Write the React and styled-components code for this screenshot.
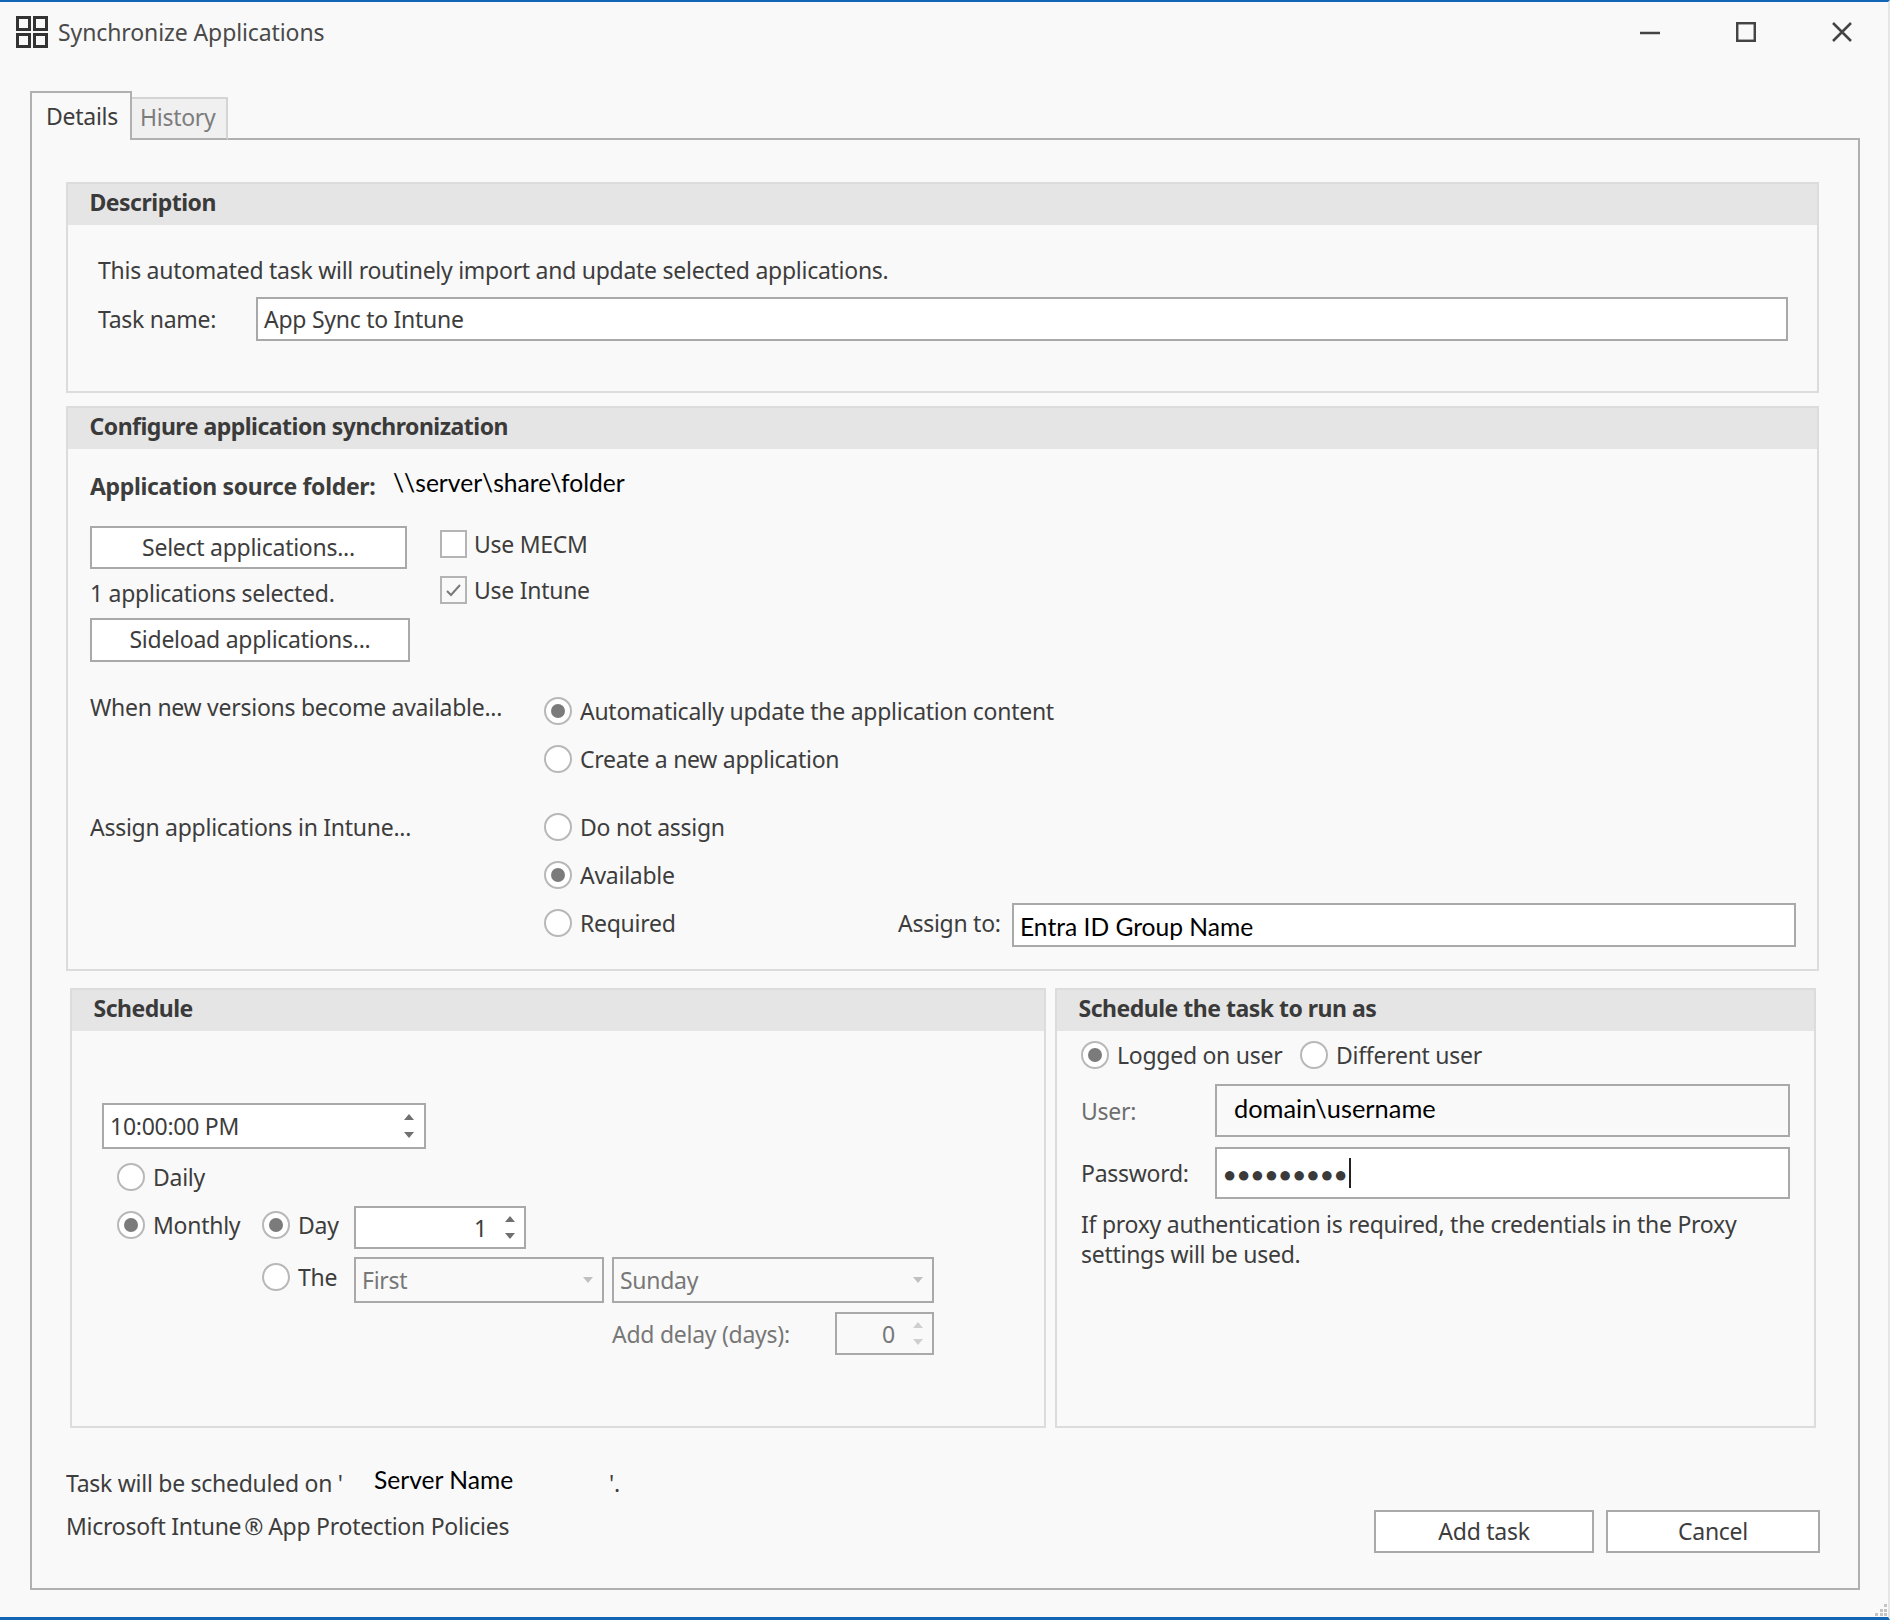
import styled, { createGlobalStyle } from "styled-components";

const Global = createGlobalStyle`
  html, body { margin: 0; padding: 0; background: #fff; }
  * { box-sizing: border-box; }
`;

const Win = styled.div`
  position: relative;
  width: 1890px;
  height: 1620px;
  background: #f9f9f9;
  border-top: 2px solid #1266b5;
  border-bottom: 3px solid #1266b5;
  border-right: 2px solid #e6e6e6;
  font-family: "Noto Sans", "Open Sans", sans-serif;
  font-size: 23px;
  letter-spacing: -0.27px;
  color: #3d3d3d;
`;

const TitleBar = styled.div`
  display: flex;
  align-items: center;
  height: 60px;
  padding-left: 16px;
`;

const Title = styled.div`
  margin-left: 10px;
  flex: 1;
  color: #4a4a4a;
  letter-spacing: -0.1px;
`;

const WinButtons = styled.div`
  display: flex;
  gap: 76px;
  margin-right: 36px;
`;

const TabWrap = styled.div`
  display: flex;
  align-items: flex-end;
  height: 47px;
  margin-top: 31px;
  margin-bottom: -2px;
  padding-left: 30px;
  position: relative;
  z-index: 1;
`;

const Tab = styled.div`
  flex-shrink: 0;
  height: ${(p) => (p.$active ? "49px" : "43px")};
  width: ${(p) => (p.$active ? "102px" : "96px")};
  padding-left: ${(p) => (p.$active ? "14px" : "8px")};
  padding-top: ${(p) => (p.$active ? "5px" : "0")};
  background: ${(p) => (p.$active ? "#f9f9f9" : "#f0f0f0")};
  border: 2px solid ${(p) => (p.$active ? "#b0b0b0" : "#d4d4d4")};
  border-bottom: ${(p) => (p.$active ? "none" : "2px solid #b0b0b0")};
  border-left: ${(p) => (p.$active ? "2px solid #b0b0b0" : "none")};
  color: ${(p) => (p.$active ? "#3d3d3d" : "#7c7c7c")};
  line-height: 36px;
`;

const Panel = styled.div`
  margin-left: 30px;
  width: 1830px;
  height: 1452px;
  border: 2px solid #b0b0b0;
  padding: 42px 38px 0 34px;
`;

const Section = styled.section`
  border: 2px solid #dcdcdc;
  height: ${(p) => p.$h}px;
  width: ${(p) => p.$w || 1753}px;
  margin-bottom: ${(p) => p.$mb || 0}px;
`;

const SectionHead = styled.h2`
  margin: 0;
  height: 41px;
  background: #e5e5e5;
  font-size: 23px;
  font-weight: 700;
  line-height: 37px;
  padding-left: 21.5px;
  letter-spacing: -0.5px;
  color: #3a3a3a;
`;

const Line = styled.div`
  line-height: 30px;
  white-space: nowrap;
  margin: ${(p) => p.$m || 0};
`;

const DescBody = styled.div`
  padding: 30px 0 0 30px;
`;

const FieldRow = styled.div`
  display: flex;
  align-items: center;
  margin-top: ${(p) => p.$mt || 0}px;
`;

const Label = styled.div`
  flex: 0 0 ${(p) => p.$w}px;
  white-space: nowrap;
  color: ${(p) => p.$color || "inherit"};
`;

const Box = styled.div`
  display: flex;
  align-items: center;
  flex: 0 0 ${(p) => p.$w}px;
  height: ${(p) => p.$h}px;
  margin-top: ${(p) => p.$mt || 0}px;
  padding: 0 5px 0 ${(p) => p.$pl || 6}px;
  border: 2px solid #a9a9a9;
  background: ${(p) => (p.$off ? "#f9f9f9" : "#fff")};
  color: ${(p) => (p.$off ? "#777" : "inherit")};
  white-space: nowrap;
`;

const BoxText = styled.span`
  flex: 1;
  text-align: ${(p) => (p.$right ? "right" : "left")};
`;

const Dark = styled.span`
  position: relative;
  top: ${(p) => p.$top || 0}px;
  font-family: Lato, "Noto Sans", sans-serif;
  font-size: ${(p) => p.$size || 24.6}px;
  letter-spacing: 0;
  color: #000;
  white-space: nowrap;
`;

const ConfigBody = styled.div`
  padding: 22px 0 0 22px;
`;

const SourceRow = styled.div`
  display: flex;
  align-items: flex-start;
`;

const SourceLabel = styled.div`
  flex: 0 0 303px;
  font-weight: 700;
  letter-spacing: -0.33px;
  line-height: 30px;
`;

const SourceValue = styled(Dark)`
  margin-top: -3px;
`;

const AppsGrid = styled.div`
  display: grid;
  grid-template-columns: 350px 1fr;
  margin-top: 25px;
`;

const AppsLeft = styled.div`
  display: flex;
  flex-direction: column;
  align-items: flex-start;
`;

const Button = styled.button`
  display: block;
  width: ${(p) => p.$w}px;
  height: ${(p) => p.$h || 43}px;
  padding: 0 0 2px;
  background: #fff;
  border: 2px solid #a9a9a9;
  font: inherit;
  letter-spacing: inherit;
  color: #3d3d3d;
`;

const Checks = styled.div`
  display: flex;
  flex-direction: column;
  gap: 18px;
  padding-top: 4px;
`;

const CheckRow = styled.div`
  display: flex;
  align-items: center;
  gap: 7px;
  height: 28px;
`;

const CheckBox = styled.span`
  display: flex;
  align-items: center;
  justify-content: center;
  width: 27px;
  height: 28px;
  border: 2px solid #b4b4b4;
  background: ${(p) => (p.$on ? "#f9f9f9" : "#fff")};
`;

const OptGroup = styled.div`
  display: grid;
  grid-template-columns: 454px 1fr;
  margin-top: ${(p) => p.$mt}px;
`;

const OptLabel = styled.div`
  line-height: 30px;
  margin-top: ${(p) => p.$mt}px;
  white-space: nowrap;
`;

const RadioRow = styled.div`
  display: flex;
  align-items: center;
  gap: ${(p) => p.$gap || 8}px;
  flex: 0 0 ${(p) => (p.$w ? `${p.$w}px` : "auto")};
  height: ${(p) => p.$h || 48}px;
  margin-top: ${(p) => p.$mt || 0}px;
  white-space: nowrap;
`;

const Radio = styled.span`
  position: relative;
  flex: 0 0 28px;
  height: 28px;
  border-radius: 50%;
  border: 2px solid #b8b8b8;
  background: #fff;
  &::after {
    content: "";
    display: ${(p) => (p.$on ? "block" : "none")};
    position: absolute;
    left: 5px;
    top: 5px;
    width: 14px;
    height: 14px;
    border-radius: 50%;
    background: #7b7b7b;
  }
`;

const ScheduleRow = styled.div`
  display: flex;
  gap: 9px;
  margin-left: 4px;
  margin-top: 17px;
`;

const SchedBody = styled.div`
  padding: 72px 0 0 30px;
`;

const Indented = styled.div`
  margin-left: 15px;
`;

const Flex = styled.div`
  display: flex;
  align-items: ${(p) => p.$align || "center"};
  margin-top: ${(p) => p.$mt || 0}px;
  margin-left: ${(p) => p.$ml || 0}px;
`;

const Spacer = styled.div`
  flex: 0 0 ${(p) => p.$w}px;
`;

const Arrows = styled.span`
  display: flex;
  flex-direction: column;
  align-items: center;
  gap: ${(p) => p.$gap || 12}px;
  margin-right: ${(p) => p.$mr || 0}px;
  margin-left: ${(p) => p.$ml || 0}px;
`;

const Tri = styled.span`
  width: 0;
  height: 0;
  margin-right: ${(p) => p.$mr || 0}px;
  border-left: 5px solid transparent;
  border-right: 5px solid transparent;
  ${(p) => (p.$up ? "border-bottom" : "border-top")}: 6px solid ${(p) => p.$c || "#707070"};
`;

const RunBody = styled.div`
  padding-left: 24px;
`;

const Dots = styled.span`
  letter-spacing: 0.6px;
  font-size: 22px;
  line-height: 1;
  color: #3a3a3a;
  margin-left: 2px;
`;

const Caret = styled.span`
  width: 2px;
  height: 30px;
  background: #222;
  margin-left: 1px;
`;

const Note = styled.p`
  margin: 10px 0 0;
  width: 670px;
  line-height: 30px;
`;

const Footer = styled.div`
  display: flex;
  justify-content: space-between;
  margin-top: 39px;
`;

const FootLines = styled.div`
  display: flex;
  flex-direction: column;
  gap: 11px;
`;

const FootRow = styled.div`
  display: flex;
  height: 32px;
  align-items: center;
  white-space: nowrap;
`;

const Reg = styled.span`
  margin: 0 5px 0 3px;
`;

const Buttons = styled.div`
  display: flex;
  gap: 12px;
  margin-top: 43px;
`;

const Grip = styled.svg`
  position: absolute;
  right: 0;
  bottom: 0;
`;

const Icon = ({ children, size = 20, w = 2.5 }) => (
  <svg width={size} height={size} viewBox={`0 0 ${size} ${size}`} fill="none" stroke="#444" strokeWidth={w}>
    {children}
  </svg>
);

const Opt = ({ on, children, ...rest }) => (
  <RadioRow {...rest}>
    <Radio $on={on} />
    <span>{children}</span>
  </RadioRow>
);

export default function App() {
  return (
    <Win>
      <Global />
      <TitleBar>
        <svg width="32" height="32" viewBox="0 0 32 32" fill="none" stroke="#333" strokeWidth="3">
          <rect x="1.5" y="1.5" width="12" height="12" />
          <rect x="18.5" y="1.5" width="12" height="12" />
          <rect x="1.5" y="18.5" width="12" height="12" />
          <rect x="18.5" y="18.5" width="12" height="12" />
        </svg>
        <Title>Synchronize Applications</Title>
        <WinButtons>
          <Icon>
            <path d="M0 11h20" />
          </Icon>
          <Icon>
            <rect x="1.2" y="1.2" width="17.6" height="17.6" />
          </Icon>
          <Icon>
            <path d="M1 1l18 18M19 1L1 19" />
          </Icon>
        </WinButtons>
      </TitleBar>
      <TabWrap>
        <Tab $active>Details</Tab>
        <Tab>History</Tab>
      </TabWrap>
      <Panel>
        <Section $h={211} $mb={13}>
          <SectionHead>Description</SectionHead>
          <DescBody>
            <Line>This automated task will routinely import and update selected applications.</Line>
            <FieldRow $mt={12}>
              <Label $w={158}>Task name:</Label>
              <Box $w={1532} $h={44}>App Sync to Intune</Box>
            </FieldRow>
          </DescBody>
        </Section>
        <Section $h={565}>
          <SectionHead>Configure application synchronization</SectionHead>
          <ConfigBody>
            <SourceRow>
              <SourceLabel>Application source folder:</SourceLabel>
              <SourceValue>\\server\share\folder</SourceValue>
            </SourceRow>
            <AppsGrid>
              <AppsLeft>
                <Button $w={317}>Select applications...</Button>
                <Line $m="9px 0 10px">1 applications selected.</Line>
                <Button $w={320} $h={44}>Sideload applications...</Button>
              </AppsLeft>
              <Checks>
                <CheckRow>
                  <CheckBox />
                  Use MECM
                </CheckRow>
                <CheckRow>
                  <CheckBox $on>
                    <svg width="15" height="13" viewBox="0 0 15 13" fill="none" stroke="#7a7a7a" strokeWidth="2">
                      <path d="M1 7l4 4 9-10" />
                    </svg>
                  </CheckBox>
                  Use Intune
                </CheckRow>
              </Checks>
            </AppsGrid>
            <OptGroup $mt={25}>
              <OptLabel $mt={5}>When new versions become available...</OptLabel>
              <div>
                <Opt on>Automatically update the application content</Opt>
                <Opt>Create a new application</Opt>
              </div>
            </OptGroup>
            <OptGroup $mt={20}>
              <OptLabel $mt={9}>Assign applications in Intune...</OptLabel>
              <div>
                <Opt>Do not assign</Opt>
                <Opt on>Available</Opt>
                <Flex>
                  <Opt $w={354}>Required</Opt>
                  <Label $w={114}>Assign to:</Label>
                  <Box $w={784} $h={44} $mt={4}>
                    <Dark $size={24.6} $top={1}>Entra ID Group Name</Dark>
                  </Box>
                </Flex>
              </div>
            </OptGroup>
          </ConfigBody>
        </Section>
        <ScheduleRow>
          <Section $h={440} $w={976}>
            <SectionHead>Schedule</SectionHead>
            <SchedBody>
              <Flex>
                <Box $w={324} $h={46}>
                  <BoxText>10:00:00 PM</BoxText>
                  <Arrows $mr={5}>
                    <Tri $up />
                    <Tri />
                  </Arrows>
                </Box>
              </Flex>
              <Indented>
                <Opt $mt={4}>Daily</Opt>
                <Flex $mt={5} $align="flex-start">
                  <Opt on $w={145} $h={37}>Monthly</Opt>
                  <Opt on $w={92} $h={37}>Day</Opt>
                  <Box $w={172} $h={43}>
                    <BoxText $right>1</BoxText>
                    <Arrows $ml={18} $mr={4} $gap={11}>
                      <Tri $up />
                      <Tri />
                    </Arrows>
                  </Box>
                </Flex>
                <Flex $mt={8} $ml={145} $align="flex-start">
                  <Opt $w={92} $h={40}>The</Opt>
                  <Box $w={250} $h={46} $off>
                    <BoxText>First</BoxText>
                    <Tri $c="#c0c0c0" $mr={4} />
                  </Box>
                  <Spacer $w={8} />
                  <Box $w={322} $h={46} $off>
                    <BoxText>Sunday</BoxText>
                    <Tri $c="#c0c0c0" $mr={4} />
                  </Box>
                </Flex>
                <Flex $mt={9} $ml={495}>
                  <Label $w={223} $color="#777">Add delay (days):</Label>
                  <Box $w={99} $h={43} $off>
                    <BoxText $right>0</BoxText>
                    <Arrows $ml={18} $mr={4} $gap={11}>
                      <Tri $up $c="#cfcfcf" />
                      <Tri $c="#cfcfcf" />
                    </Arrows>
                  </Box>
                </Flex>
              </Indented>
            </SchedBody>
          </Section>
          <Section $h={440} $w={761}>
            <SectionHead>Schedule the task to run as</SectionHead>
            <RunBody>
              <Flex>
                <Opt on $w={219}>Logged on user</Opt>
                <Opt>Different user</Opt>
              </Flex>
              <Flex $mt={5}>
                <Label $w={134} $color="#6e6e6e">User:</Label>
                <Box $w={575} $h={53} $off $pl={17}>
                  <Dark $size={25.4} $top={-3}>domain\username</Dark>
                </Box>
              </Flex>
              <Flex $mt={10}>
                <Label $w={134}>Password:</Label>
                <Box $w={575} $h={52} $pl={4}>
                  <Dots>●●●●●●●●●</Dots>
                  <Caret />
                </Box>
              </Flex>
              <Note>If proxy authentication is required, the credentials in the Proxy settings will be used.</Note>
            </RunBody>
          </Section>
        </ScheduleRow>
        <Footer>
          <FootLines>
            <FootRow>
              <Label $w={308}>Task will be scheduled on '</Label>
              <Label $w={235}>
                <Dark $top={-3}>Server Name</Dark>
              </Label>
              <Label $w={20}>'.</Label>
            </FootRow>
            <FootRow>
              Microsoft Intune<Reg>®</Reg>App Protection Policies
            </FootRow>
          </FootLines>
          <Buttons>
            <Button $w={220}>Add task</Button>
            <Button $w={214}>Cancel</Button>
          </Buttons>
        </Footer>
      </Panel>
      <Grip width="16" height="16" viewBox="0 0 16 16" fill="#c4c4c4">
        <rect x="12" y="3" width="3" height="3" />
        <rect x="8" y="8" width="3" height="3" />
        <rect x="12" y="8" width="3" height="3" />
        <rect x="3" y="12" width="3" height="3" />
        <rect x="8" y="12" width="3" height="3" />
        <rect x="12" y="12" width="3" height="3" />
      </Grip>
    </Win>
  );
}
